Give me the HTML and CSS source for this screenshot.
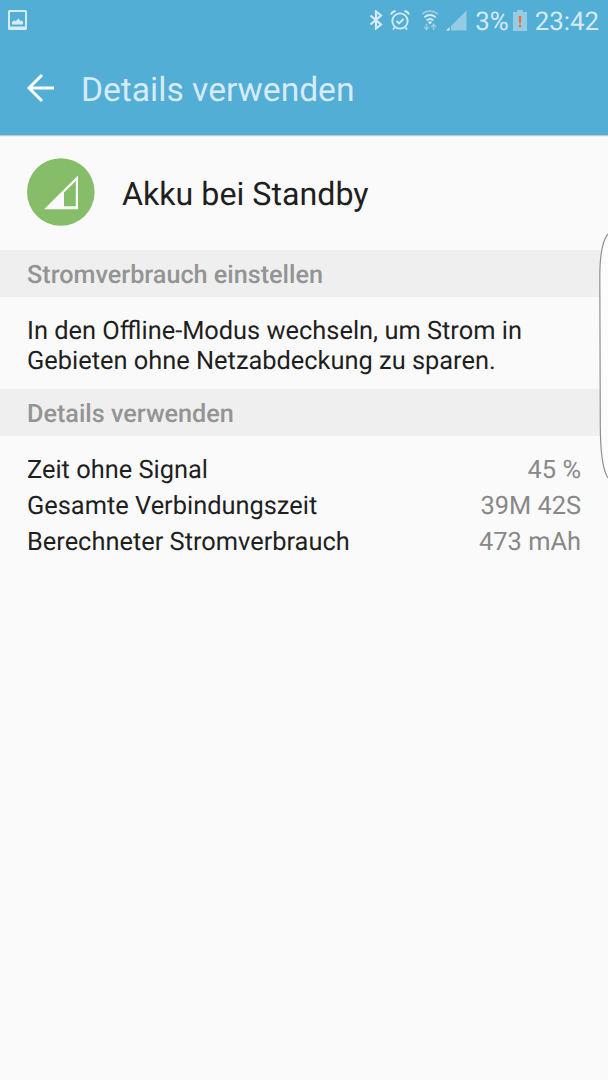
FILE: index.html
```html
<!DOCTYPE html>
<html lang="de">

<head>
  <meta charset="UTF-8">
  <meta name="viewport" content="width=device-width, initial-scale=1.0">
  <title>Details verwenden</title>
  <link rel="stylesheet" href="styles.css">
</head>

<body>
  <header class="header">
    <div class="status-bar">
      <svg class="icon-picture" width="19" height="20" viewBox="0 0 19 20">
        <path fill-rule="evenodd" d="M1.500 0h16q1.500 0 1.500 1.500v17q0 1.500-1.500 1.500h-16Q0 20 0 18.500v-17Q0 0 1.500 0zM2 2v14.500h15V2z" />
        <path d="M4 14.500v-2.300l2-2 1.500 1 3-2.700 2 2.500 1.500-.5 1 1.500v2.500z" />
      </svg>
      <div class="status-right">
        <svg class="icon-bluetooth" width="14" height="20" viewBox="0 0 14 20">
          <path d="M1.500 5.500l10.500 9-5 4V1.500l5 4-10.500 9" />
        </svg>
        <svg class="icon-alarm" width="20" height="21" viewBox="0 0 20 21">
          <circle cx="10" cy="11" r="7.700" />
          <path d="M6.500 11l2.500 2.500 4.500-4.500M1 4.500Q2 1.500 5.500 1M14.500 1q3.500.5 4.500 3.500M4.500 17.500L3 19.500M15.500 17.500l1.500 2" />
        </svg>
        <svg class="icon-wifi" width="18" height="21" viewBox="0 0 18 21">
          <path class="line faint" d="M1 4q8-6 16 0" />
          <path class="line" d="M3.300 7.300q5.700-4.500 11.400 0M5.700 10.300q3.300-2.600 6.600 0" />
          <path class="solid" d="M6.800 12q2.200-1.400 4.400 0L9 14.500z" />
          <path class="arrows" d="M5.500 14v5M3.200 17l2.300 2.500L7.800 17M12.500 20v-5M10.200 17l2.300-2.500 2.300 2.500" />
        </svg>
        <svg class="icon-signal" width="21" height="21" viewBox="0 0 21 21">
          <path class="signal-rest" d="M5 16L20.500.5v20H5z" />
          <path class="signal-on" d="M0 20.500L3.500 17v3.500z" />
        </svg>
        <span class="percent">3%</span>
        <svg class="icon-battery" width="14" height="21" viewBox="0 0 14 21">
          <path class="battery-body" d="M0 2h4V0h6v2h4v19H0z" />
          <path class="battery-alert" d="M5.600 6h2.800l-.5 7.500H6.100zM5.800 14.800h2.400v2.400H5.800z" />
        </svg>
        <span class="clock">23:42</span>
      </div>
    </div>
    <div class="title-bar">
      <svg class="icon-back" width="27" height="28" viewBox="0 0 27 28">
        <path d="M15 1L2 14l13 13M2 14h25" />
      </svg>
      <h1 class="title">Details verwenden</h1>
    </div>
  </header>

  <main>
    <div class="app">
      <svg class="standby-icon" width="68" height="68" viewBox="0 0 68 68">
        <circle class="standby-circle" cx="33.800" cy="34" r="33.800" />
        <path class="standby-signal" fill-rule="evenodd" d="M17 51.300L51 17.500v33.800zM37 34.500v13.800h11.800V23z" />
      </svg>
      <span class="app-name">Akku bei Standby</span>
    </div>

    <h2 class="section-title">Stromverbrauch einstellen</h2>
    <p class="hint">In den Offline-Modus wechseln, um Strom in<br>Gebieten ohne Netzabdeckung zu sparen.</p>

    <h2 class="section-title">Details verwenden</h2>
    <dl class="details">
      <div class="row">
        <dt>Zeit ohne Signal</dt>
        <dd>45 %</dd>
      </div>
      <div class="row">
        <dt>Gesamte Verbindungszeit</dt>
        <dd>39M 42S</dd>
      </div>
      <div class="row">
        <dt>Berechneter Stromverbrauch</dt>
        <dd>473 mAh</dd>
      </div>
    </dl>
  </main>

  <!-- edge panel handle -->
  <svg class="edge-handle" width="9" height="250" viewBox="0 0 9 250">
    <path d="M9 3Q1 12 .8 45L1.300 195Q1.500 236 9 247" />
  </svg>
</body>

</html>
```
FILE: styles.css
```css
* {
  box-sizing: border-box;
  margin: 0;
  padding: 0;
}

body {
  position: relative;
  height: 1080px;
  overflow: hidden;
  background: #fafafa;
  color: #1f1f1f;
  font-family: Roboto, "Liberation Sans", sans-serif;
  font-size: 25.4px;
  text-rendering: geometricPrecision;
}

svg {
  display: block;
  flex: none;
}

.header {
  height: 135px;
  background: #52aed5;
  box-shadow: 0 1px 1px rgba(0, 0, 0, 0.2);
}

/* status bar */
.status-bar {
  display: flex;
  justify-content: space-between;
  align-items: center;
  height: 41px;
  padding: 0 9px 0 8px;
  color: #d6ebf5;
}

.status-right {
  display: flex;
  align-items: center;
  height: 41px;
  padding-bottom: 1px;
  font-size: 25.8px;
  line-height: 40px;
}

.icon-picture {
  margin-bottom: 1px;
  fill: #d6ebf5;
}

.icon-bluetooth,
.icon-alarm {
  fill: none;
  stroke: #d6ebf5;
  stroke-width: 1.8;
}

.icon-bluetooth {
  stroke-width: 2.2;
}

.icon-alarm {
  margin-left: 7px;
}

.icon-wifi {
  margin-left: 11px;
}

.line {
  fill: none;
  stroke: #d6ebf5;
  stroke-width: 1.8;
}

.line.faint {
  stroke: #94cce4;
}

.solid,
.signal-on {
  fill: #d6ebf5;
}

.arrows {
  fill: none;
  stroke: #94cce4;
  stroke-width: 1.6;
}

.icon-signal {
  margin-left: 7px;
}

.signal-rest,
.battery-body {
  fill: #94cce4;
}

.percent {
  margin-left: 8px;
  padding-top: 4px;
}

.icon-battery {
  margin-left: 4px;
}

.battery-alert {
  fill: #e66e50;
}

.clock {
  margin-left: 8px;
  padding-top: 4px;
}

/* title bar */
.title-bar {
  display: flex;
  align-items: center;
  height: 94px;
  padding-left: 27px;
}

.icon-back {
  fill: none;
  stroke: #fff;
  stroke-width: 3;
}

.title {
  margin-left: 27px;
  padding-top: 4px;
  color: #d6ebf5;
  font-size: 33.6px;
  font-weight: 400;
}

/* content */
.app {
  display: flex;
  align-items: center;
  height: 115px;
  padding: 0 27px;
}

.standby-icon {
  margin-bottom: 1px;
}

.standby-circle {
  fill: #86bd68;
}

.standby-signal {
  fill: #fafafa;
}

.app-name {
  margin-left: 27px;
  padding-top: 2px;
  font-size: 32.2px;
}

.section-title {
  height: 47px;
  padding-left: 27px;
  background: #efefef;
  color: #949494;
  font-size: 25.2px;
  font-weight: 500;
  line-height: 51px;
}

.hint {
  height: 92px;
  padding: 19px 27px 0;
  line-height: 30px;
}

.details {
  padding: 16px 27px 0;
}

.row {
  display: flex;
  justify-content: space-between;
  line-height: 36px;
}

.row dd {
  color: #888;
}

.edge-handle {
  position: absolute;
  top: 231px;
  right: 0;
  fill: #fcfcfc;
  stroke: #909090;
  stroke-width: 1.2;
}
```
